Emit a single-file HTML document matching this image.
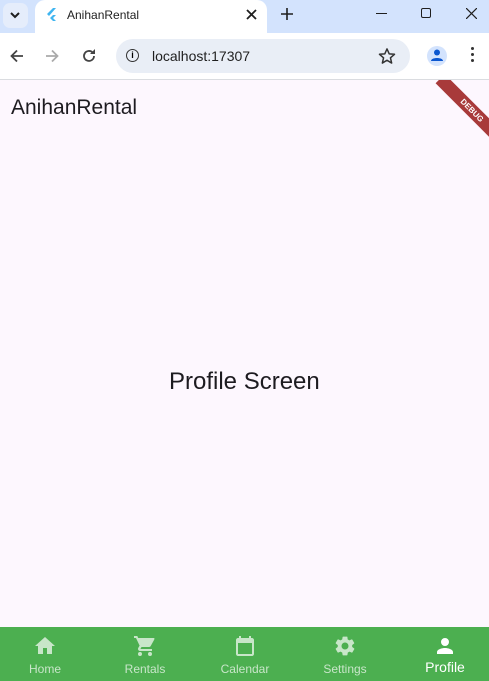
<!DOCTYPE html><html><head><style>
*{margin:0;padding:0;box-sizing:border-box}
body{width:489px;height:681px;overflow:hidden;font-family:"Liberation Sans",sans-serif;background:#fdf7fe;position:relative}
.tabs{position:absolute;top:0;left:0;width:489px;height:33px;background:#d3e3fd}
.tab{position:absolute;left:35px;top:0;width:232px;height:33px;background:#fff;border-radius:10px 10px 0 0}
.bar{position:absolute;top:33px;left:0;width:489px;height:47px;background:#fff;border-bottom:1px solid #dadce0}
.omni{position:absolute;left:116px;top:6px;width:294px;height:34px;border-radius:17px;background:#e9eef6}
.t{position:absolute;white-space:nowrap}
.nav{position:absolute;top:627px;left:0;width:489px;height:54px;background:#4caf50}
.it{position:absolute;top:0;width:98px;text-align:center;color:#c8e6c9;font-size:12px}
.it svg{display:block;margin:7px auto 4px}
</style></head><body>
<div class="tabs">
<div style="position:absolute;left:3px;top:3px;width:25px;height:25px;border-radius:7px;background:#e5edfb"></div>
<svg class="t" style="left:9px;top:10px" width="12" height="10"><path d="M2 3l4 4 4-4" stroke="#1f1f1f" stroke-width="2" fill="none"/></svg>
<div class="tab"></div>
<svg class="t" style="left:46px;top:8px" width="10" height="14"><path d="M7 0L1 6l2 2 7-8z M7 7l-3 3 3 3h3l-3-3 3-3z" fill="#40b5f0"/></svg>
<div class="t" style="left:67px;top:8px;font-size:12px;color:#1f1f1f">AnihanRental</div>
<svg class="t" style="left:246px;top:9px" width="11" height="11"><path d="M1 1l9 9M10 1l-9 9" stroke="#1f1f1f" stroke-width="1.8"/></svg>
<svg class="t" style="left:281px;top:8px" width="12" height="12"><path d="M6 0v12M0 6h12" stroke="#1f1f1f" stroke-width="1.6"/></svg>
<div class="t" style="left:376px;top:13px;width:11px;height:1px;background:#1f1f1f"></div>
<div class="t" style="left:421px;top:8px;width:10px;height:10px;border:1.3px solid #1f1f1f;border-radius:2px"></div>
<svg class="t" style="left:466px;top:8px" width="11" height="11"><path d="M0 0l11 11M11 0L0 11" stroke="#1f1f1f" stroke-width="1.2"/></svg>
</div>
<div class="bar">
<svg class="t" style="left:10px;top:16px" width="14" height="14"><path d="M13 7H2M7 1.5L1.5 7 7 12.5" stroke="#444" stroke-width="1.8" fill="none"/></svg>
<svg class="t" style="left:45px;top:16px" width="14" height="14"><path d="M1 7h11M7 1.5L12.5 7 7 12.5" stroke="#aaa" stroke-width="1.8" fill="none"/></svg>
<svg class="t" style="left:82px;top:16px" width="14" height="14"><path d="M12 7a5 5 0 1 1-1.5-3.6" stroke="#444" stroke-width="1.8" fill="none"/><path d="M13 0v5H8z" fill="#444"/></svg>
<div class="omni"></div>
<div class="t" style="left:126px;top:16px;width:13px;height:13px;border:1.5px solid #333;border-radius:50%;font-size:9px;text-align:center;line-height:10px;font-weight:bold">i</div>
<div class="t" style="left:152px;top:15px;font-size:14px;color:#1f1f1f">localhost:17307</div>
<svg class="t" style="left:378px;top:14px" width="18" height="18" viewBox="0 0 24 24"><path d="M12 2.5l2.9 6.6 7.1.6-5.4 4.7 1.6 7-6.2-3.7-6.2 3.7 1.6-7L2 9.7l7.1-.6z" stroke="#333" stroke-width="2" fill="none" stroke-linejoin="round"/></svg>
<div class="t" style="left:427px;top:13px;width:20px;height:20px;border-radius:50%;background:#d3e3fd"></div>
<svg class="t" style="left:430px;top:15px" width="14" height="14"><circle cx="7" cy="4.5" r="3" fill="#0b57d0"/><path d="M1 13c0-4 12-4 12 0z" fill="#0b57d0"/></svg>
<div class="t" style="left:471px;top:14px;width:3px;height:3px;background:#333;border-radius:50%;box-shadow:0 6px #333,0 12px #333"></div>
</div>
<div class="t" style="left:11px;top:96px;font-size:21px;color:#1d1b20">AnihanRental</div>
<div class="t" style="left:429px;top:80px;width:60px;height:60px;overflow:hidden">
<div class="t" style="left:-2px;top:24px;width:90px;height:13px;background:#a83a3a;transform:rotate(45deg);color:#fff;font-size:8px;font-weight:bold;text-align:center;line-height:13px">DEBUG</div>
</div>
<div class="t" style="left:169px;top:368px;font-size:24px;color:#1d1b20">Profile Screen</div>
<div class="nav">
<div class="it" style="left:-4px"><svg width="24" height="24" viewBox="0 0 24 24"><path d="M10 20v-6h4v6h5v-8h3L12 3 2 12h3v8z" fill="#c8e6c9"/></svg>Home</div>
<div class="it" style="left:96px"><svg width="24" height="24" viewBox="0 0 24 24"><path d="M7 18a2 2 0 100 4 2 2 0 000-4zM1 2v2h2l3.6 7.6-1.4 2.4c-.1.3-.2.6-.2 1 0 1.1.9 2 2 2h12v-2H7.4l1.1-2h7.5c.8 0 1.4-.4 1.7-1l3.6-6.5L21.4 4H5.2l-.9-2zm16 16a2 2 0 100 4 2 2 0 000-4z" fill="#c8e6c9"/></svg>Rentals</div>
<div class="it" style="left:196px"><svg width="24" height="24" viewBox="0 0 24 24"><path d="M19 4h-1V2h-2v2H8V2H6v2H5c-1.1 0-2 .9-2 2v14c0 1.1.9 2 2 2h14c1.1 0 2-.9 2-2V6c0-1.1-.9-2-2-2zm0 16H5V9h14z" fill="#c8e6c9"/></svg>Calendar</div>
<div class="it" style="left:296px"><svg width="24" height="24" viewBox="0 0 24 24"><path d="M19.1 12.9c.1-.3.1-.6.1-.9s0-.6-.1-.9l2-1.6c.2-.1.2-.4.1-.6l-1.9-3.3c-.1-.2-.4-.3-.6-.2l-2.4 1c-.5-.4-1-.7-1.6-.9L14.4 3c0-.2-.2-.4-.5-.4h-3.8c-.2 0-.4.2-.5.4l-.4 2.5c-.6.2-1.1.6-1.600.9l-2.4-1c-.2-.1-.5 0-.6.2L2.7 8.9c-.1.2-.1.5.1.6l2 1.6c0 .3-.1.6-.1.9s0 .6.1.9l-2 1.6c-.2.1-.2.4-.1.6l1.9 3.3c.1.2.4.3.6.2l2.4-1c.5.4 1 .7 1.6.9l.4 2.5c0 .2.2.4.5.4h3.8c.2 0 .4-.2.5-.4l.4-2.5c.6-.2 1.1-.6 1.6-.9l2.4 1c.2.1.5 0 .6-.2l1.9-3.3c.1-.2.1-.5-.1-.6zM12 15.5A3.5 3.5 0 1112 8.5a3.5 3.5 0 010 7z" fill="#c8e6c9"/></svg>Settings</div>
<div class="it" style="left:396px;color:#fff;font-size:14px"><svg width="24" height="24" viewBox="0 0 24 24" style="margin-bottom:1px"><path d="M12 12a4 4 0 100-8 4 4 0 000 8zm0 2c-2.7 0-8 1.3-8 4v2h16v-2c0-2.7-5.3-4-8-4z" fill="#fff"/></svg>Profile</div>
</div>
</body></html>
